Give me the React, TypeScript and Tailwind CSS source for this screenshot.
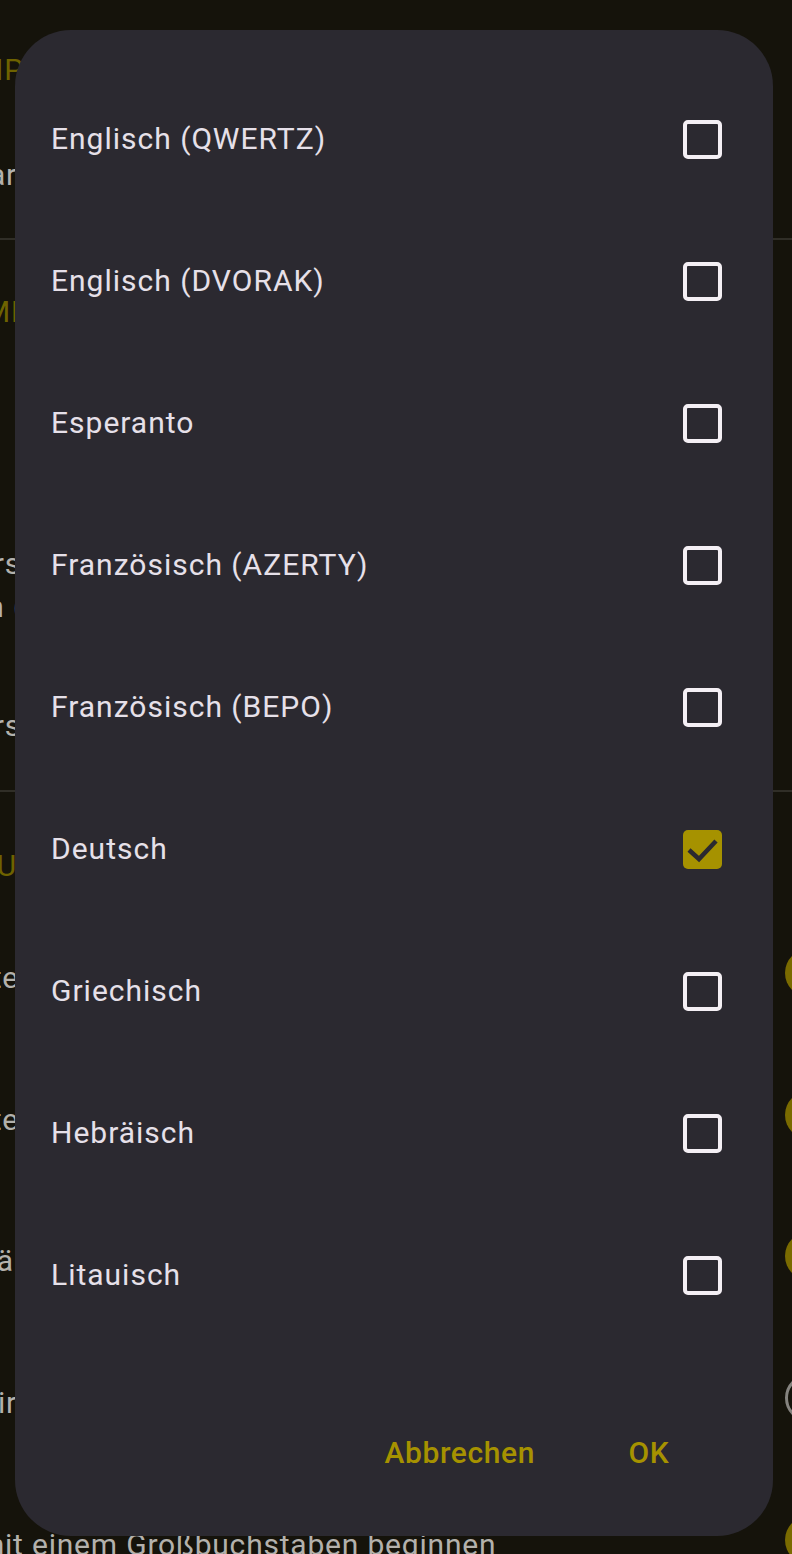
import React from 'react';

const layouts = [
  { name: 'Englisch (QWERTZ)', checked: false },
  { name: 'Englisch (DVORAK)', checked: false },
  { name: 'Esperanto', checked: false },
  { name: 'Französisch (AZERTY)', checked: false },
  { name: 'Französisch (BEPO)', checked: false },
  { name: 'Deutsch', checked: true },
  { name: 'Griechisch', checked: false },
  { name: 'Hebräisch', checked: false },
  { name: 'Litauisch', checked: false },
];

// a line of the settings page behind the dialog; only the tail of `head` peeks out at the left edge
const BgLine = ({
  head,
  tail,
  edge,
  header,
  className = '',
}: {
  head: string;
  tail: string;
  edge: string;
  header?: boolean;
  className?: string;
}) => (
  <div
    className={`flex h-[36px] items-center whitespace-nowrap text-[30px] leading-[36px] tracking-[0.8px] ${
      header ? 'text-[#6e6200]' : 'text-[#b3b1ac]'
    } ${className}`}
  >
    <div className={`${edge} flex shrink-0 justify-end`}>
      <span>{head}</span>
    </div>
    <span>{tail}</span>
  </div>
);

const Thumb = ({ on }: { on: boolean }) => (
  <div
    className={`ml-auto h-[48px] w-[48px] shrink-0 -mr-[41px] rounded-full ${
      on ? 'bg-[#7a6b00]' : 'border-[3px] border-[#85837f]'
    }`}
  />
);

const SwitchRow = ({ head, tail, edge, on, className }: { head: string; tail: string; edge: string; on: boolean; className: string }) => (
  <div className={`flex h-[48px] items-start ${className}`}>
    <BgLine head={head} tail={tail} edge={edge} className="mt-[11px]" />
    <Thumb on={on} />
  </div>
);

const Checkbox = ({ checked }: { checked: boolean }) =>
  checked ? (
    <div className="h-[39px] w-[39px] rounded-[5px] bg-[#a69200]">
      <svg viewBox="0 0 39 39" className="h-full w-full">
        <path d="M6 20 L16 29 L33 11" fill="none" stroke="#2b2930" strokeWidth="4.5" />
      </svg>
    </div>
  ) : (
    <div className="h-[39px] w-[39px] rounded-[5px] border-[4px] border-[#f4eff4]" />
  );

export default function App() {
  return (
    <div
      className="relative h-[1554px] w-[792px] overflow-hidden bg-[#15130b]"
      style={{ fontFamily: 'Roboto, "Noto Sans", sans-serif' }}
    >
      {/* settings page under the scrim */}
      <div className="flex flex-col">
        <BgLine header head="TIP" tail="PEN" edge="w-[24px]" className="mt-[52px]" />
        <BgLine head="Standar" tail="dlayout festlegen" edge="w-[17px]" className="mt-[69px]" />
        <div className="mt-[45px] h-[2px] bg-[#302e27]" />
        <BgLine header head="THEM" tail="EN" edge="w-[11px]" className="mt-[54px]" />
        <BgLine head="Farbe des Cursors" tail=" anpassen" edge="w-[21px]" className="mt-[216px]" />
        <BgLine head="Anzeigen (" tail="empfohlen)" edge="w-[24px]" className="mt-[7px]" />
        <BgLine head="Größe des Cursors" tail=" anpassen" edge="w-[21px]" className="mt-[83px]" />
        <div className="mt-[46px] h-[2px] bg-[#302e27]" />
        <BgLine header head="KORREKTU" tail="R" edge="w-[17px]" className="mt-[56px]" />
        <SwitchRow head="Autokorrekte" tail="ur aktivieren" edge="w-[19px]" on className="mt-[65px]" />
        <SwitchRow head="Vorschläge anzeigen und Texte" tail=" ergänzen" edge="w-[19px]" on className="mt-[94px]" />
        <SwitchRow head="Wörterbuch erweitern und ä" tail="ndern" edge="w-[14px]" on className="mt-[93px]" />
        <SwitchRow head="Vir" tail="tuelles Nummernfeld anzeigen" edge="w-[17px]" on={false} className="mt-[94px]" />
        <SwitchRow head="Sätze m" tail="it einem Großbuchstaben beginnen" edge="w-[5px]" on className="mt-[94px]" />
      </div>

      {/* dialog */}
      <div className="absolute left-[15px] top-[30px] flex h-[1506px] w-[758px] flex-col rounded-[56px] bg-[#2b2930]">
        <div className="pt-[38px]">
          {layouts.map((l) => (
            <div key={l.name} className="flex h-[142px] items-center justify-between pl-[36px] pr-[51px]">
              <span className="text-[30px] leading-[36px] tracking-[1px] text-[#e6e0e9]">{l.name}</span>
              <Checkbox checked={l.checked} />
            </div>
          ))}
        </div>
        <div className="mt-[67px] flex h-[80px] items-center justify-end gap-[26px] pr-[60px]">
          <button className="px-[24px] text-[30px] font-medium leading-[36px] tracking-[0.6px] text-[#a69200]">Abbrechen</button>
          <button className="w-[128px] text-center text-[30px] font-medium leading-[36px] tracking-[0.6px] text-[#a69200]">OK</button>
        </div>
      </div>
    </div>
  );
}
